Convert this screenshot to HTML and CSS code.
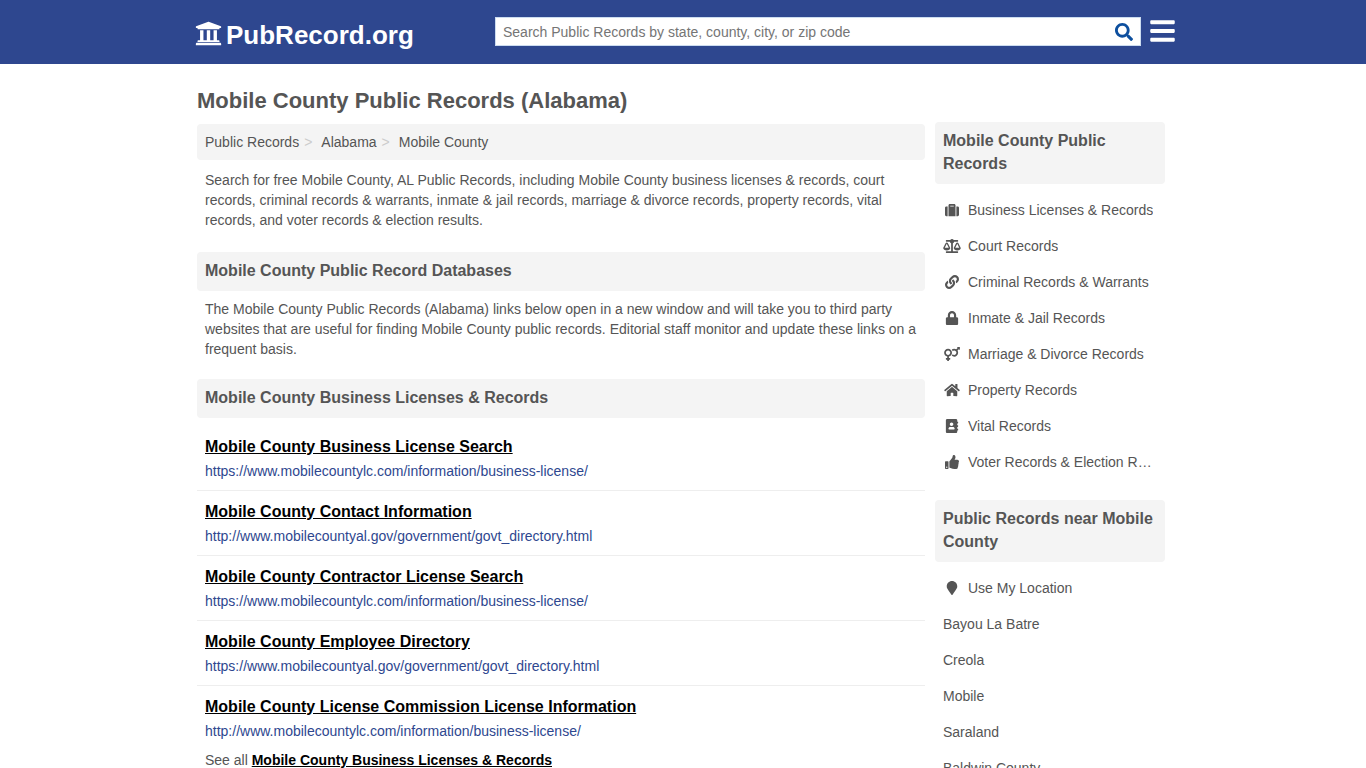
FILE: index.html
```
<!DOCTYPE html>
<html lang="en">
<head>
    <meta charset="UTF-8">
    <meta name="viewport" content="width=device-width, initial-scale=1.0">
    <title>Mobile County Public Records (Alabama)</title>
    <link rel="stylesheet" href="styles.css">
</head>
<body>
    <header class="header">
        <div class="header-inner">
            <a href="#" class="logo">
                <svg class="logo-icon" viewBox="0 0 512 512" aria-hidden="true"><path d="M496 128v16a8 8 0 0 1-8 8h-24v12c0 6.627-5.373 12-12 12H60c-6.627 0-12-5.373-12-12v-12H24a8 8 0 0 1-8-8v-16a8 8 0 0 1 4.941-7.392l232-88a7.996 7.996 0 0 1 6.118 0l232 88A8 8 0 0 1 496 128zm-24 304H40c-13.255 0-24 10.745-24 24v16a8 8 0 0 0 8 8h464a8 8 0 0 0 8-8v-16c0-13.255-10.745-24-24-24zM96 192v192H60c-6.627 0-12 5.373-12 12v20h416v-20c0-6.627-5.373-12-12-12h-36V192h-64v192h-64V192h-64v192h-64V192H96z"/></svg>
                <span>PubRecord.org</span>
            </a>
            <form class="search">
                <input type="text" class="search-input" aria-label="Search Public Records" placeholder="Search Public Records by state, county, city, or zip code">
                <button type="submit" class="search-button" aria-label="Search">
                    <svg viewBox="0 0 512 512" aria-hidden="true"><path d="M505 442.7L405.3 343c-4.5-4.5-10.6-7-17-7H372c27.6-35.3 44-79.7 44-128C416 93.1 322.9 0 208 0S0 93.1 0 208s93.1 208 208 208c48.3 0 92.7-16.4 128-44v16.3c0 6.4 2.5 12.5 7 17l99.7 99.7c9.4 9.4 24.6 9.4 33.9 0l28.3-28.3c9.4-9.4 9.4-24.6.1-34zM208 336c-70.7 0-128-57.2-128-128 0-70.7 57.2-128 128-128 70.7 0 128 57.2 128 128 0 70.7-57.2 128-128 128z"/></svg>
                </button>
            </form>
            <button type="button" class="menu-button" aria-label="Menu">
                <svg viewBox="0 0 448 512" aria-hidden="true"><path d="M16 132h416c8.837 0 16-7.163 16-16V76c0-8.837-7.163-16-16-16H16C7.163 60 0 67.163 0 76v40c0 8.837 7.163 16 16 16zm0 160h416c8.837 0 16-7.163 16-16v-40c0-8.837-7.163-16-16-16H16c-8.837 0-16 7.163-16 16v40c0 8.837 7.163 16 16 16zm0 160h416c8.837 0 16-7.163 16-16v-40c0-8.837-7.163-16-16-16H16c-8.837 0-16 7.163-16 16v40c0 8.837 7.163 16 16 16z"/></svg>
            </button>
        </div>
    </header>

    <div class="columns">
        <main class="main">
            <h1>Mobile County Public Records (Alabama)</h1>
            <nav aria-label="Breadcrumb">
                <ol class="breadcrumb">
                    <li><a href="#">Public Records</a></li>
                    <li><a href="#">Alabama</a></li>
                    <li><a href="#">Mobile County</a></li>
                </ol>
            </nav>
            <p class="text intro">Search for free Mobile County, AL Public Records, including Mobile County business licenses &amp; records, court records, criminal records &amp; warrants, inmate &amp; jail records, marriage &amp; divorce records, property records, vital records, and voter records &amp; election results.</p>

            <h2>Mobile County Public Record Databases</h2>
            <p class="text">The Mobile County Public Records (Alabama) links below open in a new window and will take you to third party websites that are useful for finding Mobile County public records. Editorial staff monitor and update these links on a frequent basis.</p>

            <h2>Mobile County Business Licenses &amp; Records</h2>
            <ul class="results">
                <li>
                    <a href="#" class="result-title">Mobile County Business License Search</a>
                    <span class="result-url">https://www.mobilecountylc.com/information/business-license/</span>
                </li>
                <li>
                    <a href="#" class="result-title">Mobile County Contact Information</a>
                    <span class="result-url">http://www.mobilecountyal.gov/government/govt_directory.html</span>
                </li>
                <li>
                    <a href="#" class="result-title">Mobile County Contractor License Search</a>
                    <span class="result-url">https://www.mobilecountylc.com/information/business-license/</span>
                </li>
                <li>
                    <a href="#" class="result-title">Mobile County Employee Directory</a>
                    <span class="result-url">https://www.mobilecountyal.gov/government/govt_directory.html</span>
                </li>
                <li>
                    <a href="#" class="result-title">Mobile County License Commission License Information</a>
                    <span class="result-url">http://www.mobilecountylc.com/information/business-license/</span>
                </li>
            </ul>
            <p class="text see-all">See all <a href="#">Mobile County Business Licenses &amp; Records</a></p>
        </main>

        <aside class="sidebar">
            <h2>Mobile County Public Records</h2>
            <ul class="links">
                <li><a href="#">
                    <svg viewBox="0 0 512 512" aria-hidden="true"><path d="M128 480h256V80c0-26.5-21.5-48-48-48H176c-26.5 0-48 21.5-48 48v400zm64-384h128v32H192V96zm320 80v256c0 26.5-21.5 48-48 48h-48V128h48c26.5 0 48 21.5 48 48zM96 480H48c-26.5 0-48-21.5-48-48V176c0-26.5 21.5-48 48-48h48v352z"/></svg>
                    <span>Business Licenses &amp; Records</span>
                </a></li>
                <li><a href="#">
                    <svg viewBox="0 0 640 512" aria-hidden="true"><path d="M256 336h-.02c0-16.18 1.34-8.73-85.05-181.51-17.65-35.29-68.19-35.36-85.87 0C-2.06 328.75.02 320.33.02 336H0c0 44.18 57.31 80 128 80s128-35.82 128-80zM128 176l72 144H56l72-144zm511.98 160c0-16.18 1.34-8.73-85.05-181.51-17.65-35.29-68.19-35.36-85.87 0-87.12 174.26-85.04 165.84-85.04 181.51H384c0 44.18 57.31 80 128 80s128-35.82 128-80h-.02zM440 320l72-144 72 144H440zm88 128H352V153.25c23.51-10.29 41.16-31.48 46.39-57.25H528c8.84 0 16-7.16 16-16V48c0-8.84-7.16-16-16-16H383.64C369.04 12.68 346.09 0 320 0s-49.04 12.68-63.64 32H112c-8.84 0-16 7.16-16 16v32c0 8.84 7.16 16 16 16h129.61c5.23 25.76 22.87 46.96 46.39 57.25V448H112c-8.84 0-16 7.16-16 16v32c0 8.84 7.16 16 16 16h416c8.84 0 16-7.16 16-16v-32c0-8.84-7.16-16-16-16z"/></svg>
                    <span>Court Records</span>
                </a></li>
                <li><a href="#">
                    <svg viewBox="0 0 512 512" aria-hidden="true"><path d="M326.612 185.391c59.747 59.809 58.927 155.698.36 214.59-.11.12-.24.25-.36.37l-67.2 67.2c-59.27 59.27-155.699 59.262-214.96 0-59.27-59.26-59.27-155.7 0-214.96l37.106-37.106c9.84-9.84 26.786-3.3 27.294 10.606.648 17.722 3.826 35.527 9.69 52.721 1.986 5.822.567 12.262-3.783 16.612l-13.087 13.087c-28.026 28.026-28.905 73.66-1.155 101.96 28.024 28.579 74.086 28.749 102.325.51l67.2-67.19c28.191-28.191 28.073-73.757 0-101.83-3.701-3.694-7.429-6.564-10.341-8.569a16.037 16.037 0 0 1-6.947-12.606c-.396-10.567 3.348-21.456 11.698-29.806l21.054-21.055c5.521-5.521 14.182-6.199 20.584-1.731a152.482 152.482 0 0 1 20.522 17.197zM467.547 44.449c-59.261-59.262-155.69-59.27-214.96 0l-67.2 67.2c-.12.12-.25.25-.36.37-58.566 58.892-59.387 154.781.36 214.59a152.454 152.454 0 0 0 20.521 17.196c6.402 4.468 15.064 3.789 20.584-1.731l21.054-21.055c8.35-8.35 12.094-19.239 11.698-29.806a16.037 16.037 0 0 0-6.947-12.606c-2.912-2.005-6.64-4.875-10.341-8.569-28.073-28.073-28.191-73.639 0-101.83l67.2-67.19c28.239-28.239 74.3-28.069 102.325.51 27.75 28.3 26.872 73.934-1.155 101.96l-13.087 13.087c-4.35 4.35-5.769 10.79-3.783 16.612 5.864 17.194 9.042 34.999 9.69 52.721.509 13.906 17.454 20.446 27.294 10.606l37.106-37.106c59.271-59.259 59.271-155.699.001-214.959z"/></svg>
                    <span>Criminal Records &amp; Warrants</span>
                </a></li>
                <li><a href="#">
                    <svg viewBox="0 0 448 512" aria-hidden="true"><path d="M400 224h-24v-72C376 68.2 307.8 0 224 0S72 68.2 72 152v72H48c-26.5 0-48 21.5-48 48v192c0 26.5 21.5 48 48 48h352c26.5 0 48-21.5 48-48V272c0-26.5-21.5-48-48-48zm-104 0H152v-72c0-39.7 32.3-72 72-72s72 32.3 72 72v72z"/></svg>
                    <span>Inmate &amp; Jail Records</span>
                </a></li>
                <li><a href="#">
                    <svg viewBox="0 0 576 512" aria-hidden="true"><path d="M564 0h-79c-10.7 0-16 12.9-8.5 20.5l16.9 16.9-48.7 48.7C422.5 72.1 396.2 64 368 64c-33.7 0-64.6 11.6-89.2 30.9 14 16.7 25 36 32.1 57.1 14.5-14.8 34.7-24 57.1-24 44.1 0 80 35.9 80 80s-35.9 80-80 80c-22.3 0-42.6-9.2-57.1-24-7.1 21.1-18 40.4-32.1 57.1 24.5 19.4 55.5 30.9 89.2 30.9 79.5 0 144-64.5 144-144 0-28.2-8.1-54.5-22.1-76.7l48.7-48.7 16.9 16.9c2.4 2.4 5.4 3.5 8.4 3.5 6.2 0 12.1-4.8 12.1-12V12c0-6.6-5.4-12-12-12zM144 64C64.5 64 0 128.5 0 208c0 68.5 47.9 125.9 112 140.4V400H76c-6.6 0-12 5.4-12 12v40c0 6.6 5.4 12 12 12h36v36c0 6.6 5.4 12 12 12h40c6.6 0 12-5.4 12-12v-36h36c6.6 0 12-5.4 12-12v-40c0-6.6-5.4-12-12-12h-36v-51.6c64.1-14.6 112-71.9 112-140.4 0-79.5-64.5-144-144-144zm0 224c-44.1 0-80-35.9-80-80s35.9-80 80-80 80 35.9 80 80-35.9 80-80 80z"/></svg>
                    <span>Marriage &amp; Divorce Records</span>
                </a></li>
                <li><a href="#">
                    <svg viewBox="0 0 576 512" aria-hidden="true"><path d="M280.37 148.26L96 300.11V464a16 16 0 0 0 16 16l112.06-.29a16 16 0 0 0 15.92-16V368a16 16 0 0 1 16-16h64a16 16 0 0 1 16 16v95.64a16 16 0 0 0 16 16.05L464 480a16 16 0 0 0 16-16V300L295.67 148.26a12.19 12.19 0 0 0-15.3 0zM571.6 251.47L488 182.56V44.05a12 12 0 0 0-12-12h-56a12 12 0 0 0-12 12v72.61L318.47 43a48 48 0 0 0-61 0L4.34 251.47a12 12 0 0 0-1.6 16.9l25.5 31A12 12 0 0 0 45.15 301l235.22-193.74a12.19 12.19 0 0 1 15.3 0L530.9 301a12 12 0 0 0 16.9-1.6l25.5-31a12 12 0 0 0-1.7-16.93z"/></svg>
                    <span>Property Records</span>
                </a></li>
                <li><a href="#">
                    <svg viewBox="0 0 448 512" aria-hidden="true"><path d="M436 160c6.6 0 12-5.4 12-12v-40c0-6.6-5.4-12-12-12h-20V48c0-26.5-21.5-48-48-48H48C21.5 0 0 21.5 0 48v416c0 26.5 21.5 48 48 48h320c26.5 0 48-21.5 48-48v-48h20c6.6 0 12-5.4 12-12v-40c0-6.6-5.4-12-12-12h-20v-64h20c6.6 0 12-5.4 12-12v-40c0-6.6-5.4-12-12-12h-20v-64h20zm-228-32c35.3 0 64 28.7 64 64s-28.7 64-64 64-64-28.7-64-64 28.7-64 64-64zm112 236.8c0 10.6-10 19.2-22.4 19.2H118.4C106 384 96 375.4 96 364.8v-19.2c0-31.8 30.1-57.6 67.2-57.6h5c12.3 5.1 25.7 8 39.8 8s27.6-2.9 39.8-8h5c37.1 0 67.2 25.8 67.2 57.6v19.2z"/></svg>
                    <span>Vital Records</span>
                </a></li>
                <li><a href="#">
                    <svg viewBox="0 0 512 512" aria-hidden="true"><path d="M104 224H24c-13.255 0-24 10.745-24 24v240c0 13.255 10.745 24 24 24h80c13.255 0 24-10.745 24-24V248c0-13.255-10.745-24-24-24zM64 472c-13.255 0-24-10.745-24-24s10.745-24 24-24 24 10.745 24 24-10.745 24-24 24zM384 81.452c0 42.416-25.97 66.208-33.277 94.548h101.723c33.397 0 59.397 27.746 59.553 58.098.084 17.938-7.546 37.249-19.439 49.197l-.11.11c9.836 23.337 8.237 56.037-9.308 79.469 8.681 25.895-.069 57.704-16.382 74.757 4.298 17.598 2.244 32.575-6.148 44.632C440.202 511.587 389.616 512 346.839 512l-2.845-.001c-48.287-.017-87.806-17.598-119.56-31.725-15.957-7.099-36.821-15.887-52.651-16.178-6.54-.12-11.783-5.457-11.783-11.998v-213.77c0-3.2 1.282-6.271 3.558-8.521 39.614-39.144 56.648-80.587 89.117-113.111 14.804-14.832 20.188-37.236 25.393-58.902C282.515 39.293 291.817 0 312 0c24 0 72 8 72 81.452z"/></svg>
                    <span>Voter Records &amp; Election Results</span>
                </a></li>
            </ul>

            <h2>Public Records near Mobile County</h2>
            <ul class="links">
                <li><a href="#">
                    <svg viewBox="0 0 384 512" aria-hidden="true"><path d="M172.268 501.67C26.97 291.031 0 269.413 0 192 0 85.961 85.961 0 192 0s192 85.961 192 192c0 77.413-26.97 99.031-172.268 309.67-9.535 13.774-29.93 13.773-39.464 0z"/></svg>
                    <span>Use My Location</span>
                </a></li>
                <li><a href="#">Bayou La Batre</a></li>
                <li><a href="#">Creola</a></li>
                <li><a href="#">Mobile</a></li>
                <li><a href="#">Saraland</a></li>
                <li><a href="#">Baldwin County</a></li>
            </ul>
        </aside>
    </div>
</body>
</html>
```
FILE: styles.css
```
/* Base */
* {
    box-sizing: border-box;
}

body {
    margin: 0;
    font-family: "Liberation Sans", Arial, sans-serif;
    font-size: 14px;
    line-height: 20px;
    color: #555;
    background: #fff;
}

a {
    color: inherit;
    text-decoration: none;
}

ul, ol {
    list-style: none;
    margin: 0;
    padding: 0;
}

svg {
    display: block;
    fill: currentColor;
}

/* Header */
.header {
    background: #2e478f;
    color: #fff;
}

.header-inner {
    display: flex;
    align-items: center;
    max-width: 984px;
    height: 64px;
    margin: 0 auto;
    padding-left: 4px;
}

.logo {
    display: flex;
    align-items: center;
    gap: 4px;
    flex: 1;
    padding-top: 6px;
    font-size: 26px;
    line-height: 30px;
    font-weight: bold;
}

.logo-icon {
    width: 27px;
    height: 27px;
    margin-top: -4px;
}

.search {
    display: flex;
    width: 646px;
    height: 29px;
    margin-bottom: 2px;
    background: #fff;
    border: 1px solid #ccdcf0;
}

.search-input {
    flex: 1;
    min-width: 0;
    padding: 2px 7px 0;
    border: 0;
    background: none;
    font: inherit;
    color: #555;
}

.search-input::placeholder {
    color: #757575;
}

.search-button,
.menu-button {
    padding: 0;
    border: 0;
    background: none;
    cursor: pointer;
}

.search-button {
    padding: 2px 7px 0;
    color: #0d4f9e;
}

.search-button svg {
    width: 18px;
    height: 18px;
}

.menu-button {
    margin: 0 0 2px 9px;
    color: #fff;
}

.menu-button svg {
    width: 25px;
    height: 28px;
}

/* Columns */
.columns {
    display: flex;
    gap: 10px;
    max-width: 972px;
    margin: 0 auto;
    padding: 22px 4px 20px 0;
}

.main {
    flex: 1;
    min-width: 0;
}

.sidebar {
    width: 230px;
    padding-top: 36px;
}

h1 {
    margin: 0 0 8px;
    font-size: 22px;
    line-height: 30px;
}

h2 {
    margin: 0 0 8px;
    padding: 7px 8px 9px;
    border-radius: 4px;
    background: #f4f4f4;
    font-size: 16px;
    line-height: 23px;
}

.breadcrumb {
    display: flex;
    padding: 8px;
    border-radius: 4px;
    background: #f4f4f4;
}

.breadcrumb li + li::before {
    content: ">";
    padding: 0 9px 0 5px;
    color: #ccc;
}

.text {
    margin: 0 0 20px;
    padding: 0 8px;
}

.intro {
    margin: 10px 0 22px;
}

/* Results */
.results li {
    display: flex;
    flex-direction: column;
    align-items: flex-start;
    padding: 8px 8px 6px;
    border-bottom: 1px solid #eee;
    line-height: 25px;
}

.results li:last-child {
    border-bottom: 0;
}

.result-title {
    font-size: 16px;
    font-weight: bold;
    color: #000;
    text-decoration: underline;
}

.result-url {
    color: #2e478f;
}

.see-all a {
    font-weight: bold;
    color: #000;
    text-decoration: underline;
}

/* Sidebar links */
.links {
    margin-bottom: 20px;
}

.links a {
    display: flex;
    align-items: center;
    gap: 7px;
    padding: 8px;
}

.links svg {
    flex: none;
    width: 18px;
    height: 14px;
}

.links span {
    overflow: hidden;
    white-space: nowrap;
    text-overflow: ellipsis;
}
```
